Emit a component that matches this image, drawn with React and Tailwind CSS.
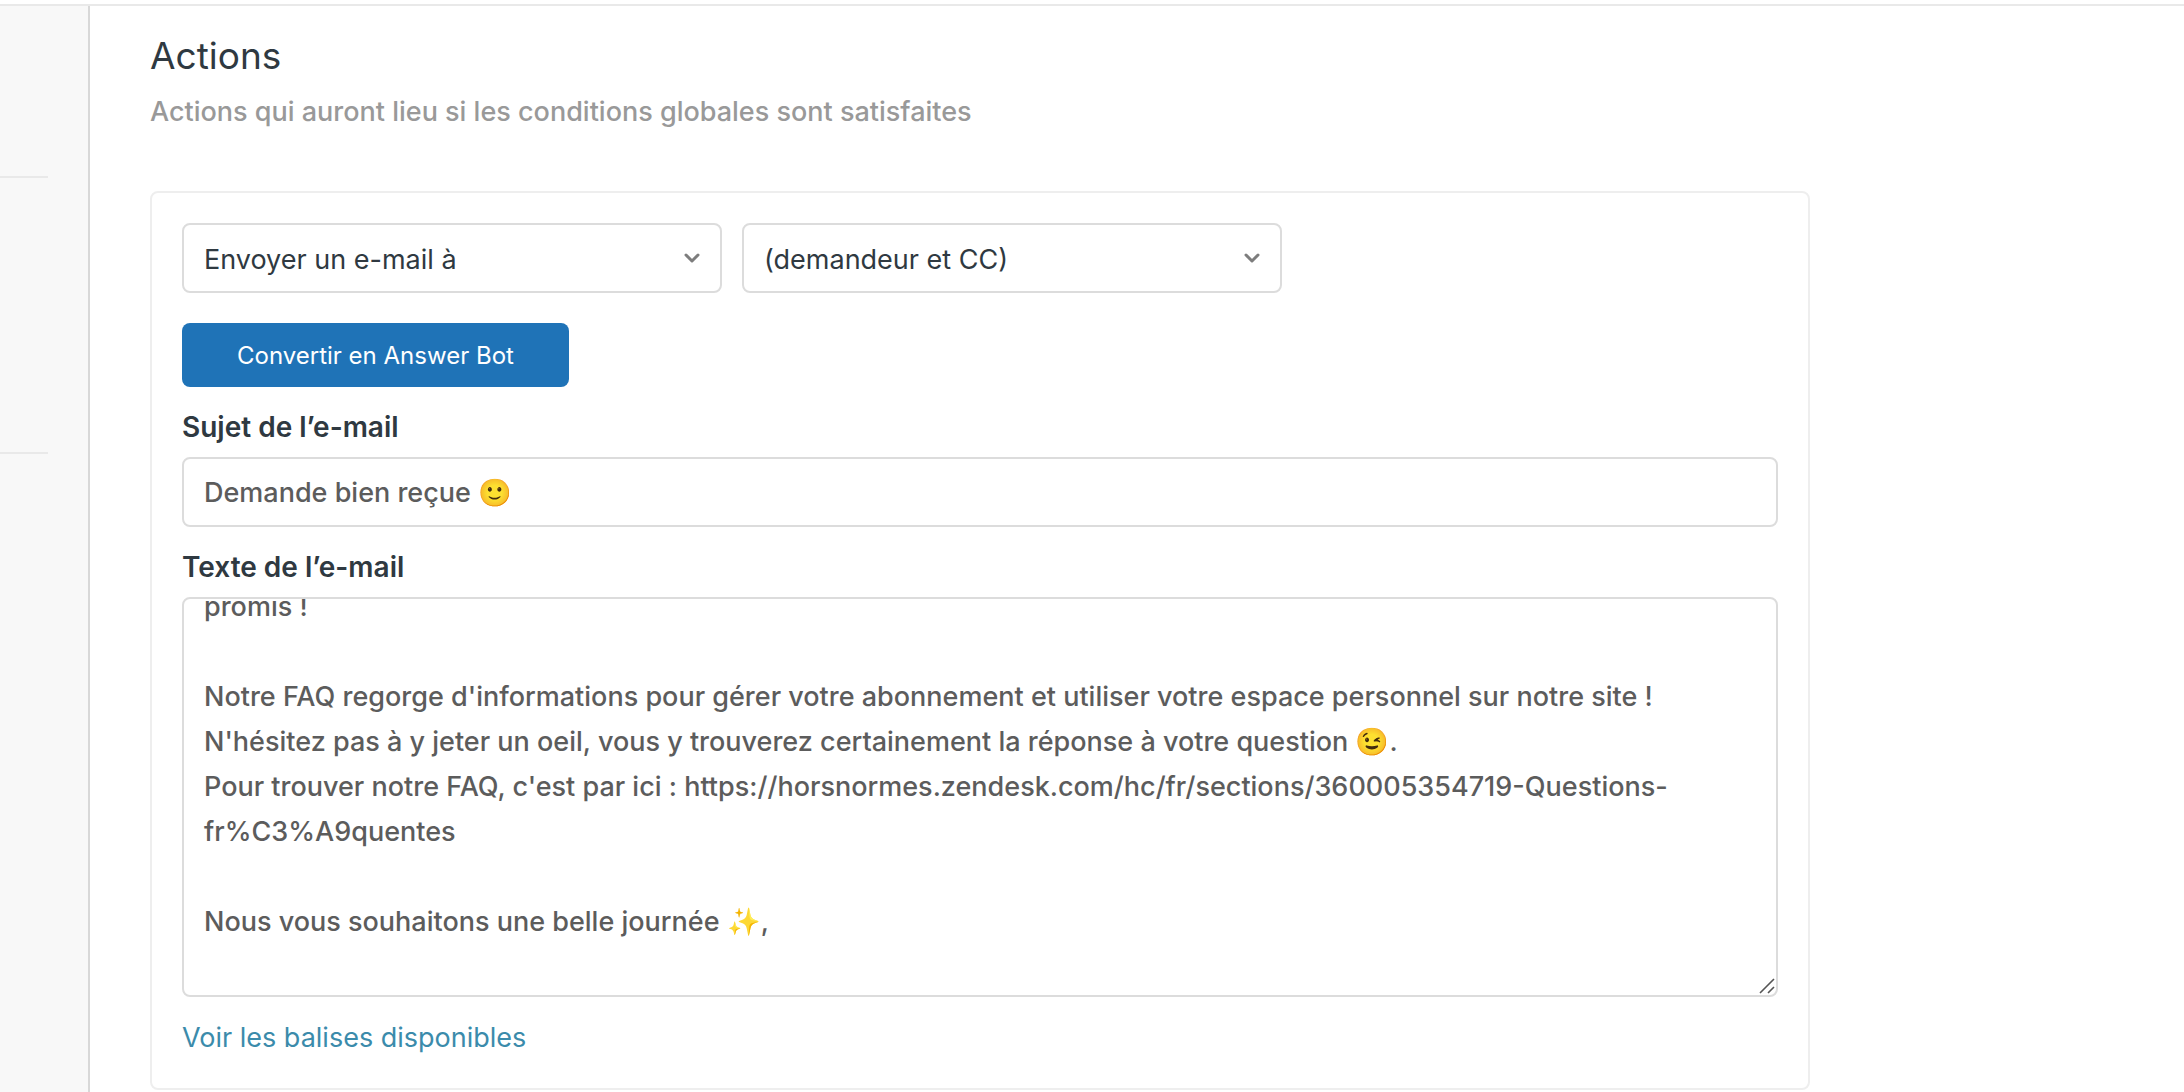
import { useLayoutEffect, useRef, useState } from "react";

const SUBJECT = "Demande bien reçue 🙂";

const BODY = `promis !

Notre FAQ regorge d'informations pour gérer votre abonnement et utiliser votre espace personnel sur notre site !
N'hésitez pas à y jeter un oeil, vous y trouverez certainement la réponse à votre question 😉.
Pour trouver notre FAQ, c'est par ici : https://horsnormes.zendesk.com/hc/fr/sections/360005354719-Questions-fr%C3%A9quentes

Nous vous souhaitons une belle journée ✨,

`;

function Chevron() {
  return (
    <svg
      viewBox="0 0 16 10"
      className="pointer-events-none absolute top-1/2 right-[22px] h-[10px] w-4 -translate-y-1/2"
      fill="none"
      stroke="#7d7d7d"
      strokeWidth="3"
      strokeLinecap="round"
      strokeLinejoin="round"
      aria-hidden="true"
    >
      <path d="M2 2l6 6 6-6" />
    </svg>
  );
}

function Grip() {
  return (
    <svg
      viewBox="0 0 16 16"
      className="pointer-events-none absolute right-[3px] bottom-[3px] size-4"
      fill="none"
      stroke="#555555"
      strokeWidth="1.6"
      aria-hidden="true"
    >
      <path d="M1 15L15 1M9 15l6-6" />
    </svg>
  );
}

function Select({ label, option }) {
  return (
    <div className="relative w-full max-w-[540px]">
      <select
        aria-label={label}
        className="h-[70px] w-full appearance-none rounded-lg border-2 border-[#dcdcdc] bg-white px-5 pt-1 text-[27px] text-[#2f3941]"
      >
        <option>{option}</option>
      </select>
      <Chevron />
    </div>
  );
}

export default function App() {
  const bodyRef = useRef(null);
  const [subject, setSubject] = useState(SUBJECT);
  const [body, setBody] = useState(BODY);

  useLayoutEffect(() => {
    bodyRef.current.scrollTop = 35;
  }, []);

  return (
    <div className="flex min-h-screen flex-col bg-white pt-1 font-['Inter',sans-serif] text-[27px] leading-[40px] text-[#2f3941]">
      <div className="flex grow border-t-2 border-[#e9e9e9]">
        <aside className="flex w-[90px] shrink-0 flex-col border-r-2 border-[#d8d8d8] bg-[#f8f8f8] pt-[170px]">
          <hr className="w-12 border-t-2 border-[#e9e9e9]" />
          <hr className="mt-[274px] w-12 border-t-2 border-[#e9e9e9]" />
        </aside>

        <main className="min-w-0 grow px-[60px] pt-6">
          <h1 className="text-[37px] leading-[52px]">Actions</h1>
          <p className="mt-[10px] font-medium text-[#999999]">
            Actions qui auront lieu si les conditions globales sont satisfaites
          </p>

          <section className="mt-[59px] flex max-w-[1660px] flex-col items-start rounded-lg border-2 border-[#eeeeee] p-[30px]">
            <div className="flex w-full gap-5">
              <Select label="Action" option="Envoyer un e-mail à" />
              <Select label="Destinataire" option="(demandeur et CC)" />
            </div>

            <button
              type="button"
              className="mt-[30px] h-16 rounded-lg bg-[#1f73b7] px-[55px] pt-0.5 text-[24px] text-white"
            >
              Convertir en Answer Bot
            </button>

            <label htmlFor="subject" className="mt-5 text-[28px] font-semibold">
              Sujet de l’e-mail
            </label>
            <input
              id="subject"
              type="text"
              value={subject}
              onChange={(e) => setSubject(e.target.value)}
              className="mt-[10px] h-[70px] w-full rounded-lg border-2 border-[#dcdcdc] px-5 font-medium text-[#5c5c5c]"
            />

            <label htmlFor="body" className="mt-5 text-[28px] font-semibold">
              Texte de l’e-mail
            </label>
            <div className="relative mt-[10px] w-full">
              <textarea
                id="body"
                ref={bodyRef}
                value={body}
                onChange={(e) => setBody(e.target.value)}
                className="block h-[400px] w-full resize-y rounded-lg border-2 border-[#dcdcdc] p-5 leading-[45px] font-medium text-[#5c5c5c] [&::-webkit-resizer]:bg-transparent [&::-webkit-scrollbar]:w-4 [&::-webkit-scrollbar]:bg-transparent"
              />
              <Grip />
            </div>

            <a href="#balises" className="mt-[21px] text-[#3b8bab]">
              Voir les balises disponibles
            </a>
          </section>
        </main>
      </div>
    </div>
  );
}
